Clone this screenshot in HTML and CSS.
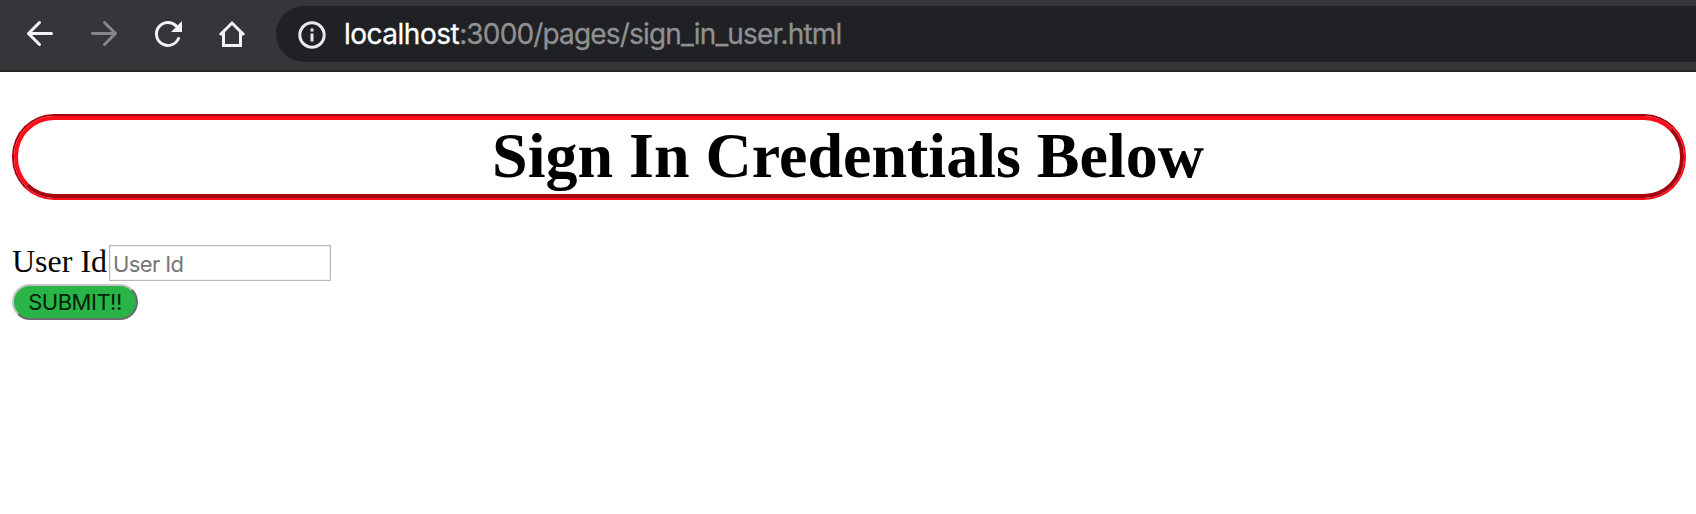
FILE: index.html
```html
<!DOCTYPE html>
<html lang="en">
<head>
<meta charset="utf-8">
<title>Sign In</title>
<link rel="stylesheet" href="styles.css">
</head>
<body>
<header class="toolbar">
  <nav class="nav">
    <svg class="icon" viewBox="0 0 32 32"><path d="M27.500 15.500H4.500M15.500 4.500L4.500 15.500l11 11"/></svg>
    <svg class="icon icon-disabled" viewBox="0 0 32 32"><path d="M4.500 15.500H27.500M16.500 4.500L27.500 15.500l-11 11"/></svg>
    <svg class="icon" viewBox="0 0 32 32"><path d="M26.500 20.500A11.500 11.500 0 1 1 24.200 7.900"/><path class="solid" d="M30 3v11H19z"/></svg>
    <svg class="icon" viewBox="0 0 32 32"><path class="home" d="M4 17L16 5l12 12M7.500 14.500v13h17v-13"/></svg>
  </nav>
  <div class="address">
    <svg class="info" viewBox="0 0 28 28"><circle cx="14" cy="14" r="12.200"/><path d="M14 12.500v8M14 7.500v3"/></svg>
    <div class="url"><span class="host">localhost</span><span class="path">:3000/pages/sign_in_user.html</span></div>
  </div>
</header>
<main class="page">
  <h1 class="title"><span class="title-inner">Sign In Credentials Below</span></h1>
  <form class="form">
    <div class="field"><label class="label" for="uid">User Id</label><input class="input" id="uid" type="text" placeholder="User Id"></div>
    <button class="submit" type="button">SUBMIT!!</button>
  </form>
</main>
</body>
</html>
```
FILE: styles.css
```css
* { box-sizing: border-box; }
body { margin: 0; background: #fff; color: #000; font-family: "Liberation Serif", serif; overflow: hidden; }
.toolbar { display: flex; height: 72px; padding: 6px 0 8px 24px; background: #35363a; border-bottom: 2px solid #292526; }
.nav { display: flex; gap: 32px; padding-top: 12px; width: 252px; flex: none; }
.icon { width: 32px; height: 32px; flex: none; fill: none; stroke: #f1f3f4; stroke-width: 3; stroke-linecap: round; stroke-linejoin: round; }
.icon-disabled { stroke: #858688; }
.icon .solid { fill: #f1f3f4; stroke: none; }
.icon .home { stroke-linecap: butt; stroke-linejoin: miter; }
.address { display: flex; align-items: center; flex: 1; height: 56px; padding-left: 22px; background: #202124; border-radius: 28px 0 0 28px; }
.info { width: 28px; height: 28px; margin: 1px 18px 0 0; fill: none; stroke: #e8eaed; stroke-width: 3; }
.url { font: 28px/40px Inter, sans-serif; white-space: nowrap; -webkit-text-stroke: 0.300px; }
.host { color: #fff; letter-spacing: -0.500px; }
.path { color: #8f9092; letter-spacing: -0.840px; }
.page { padding: 42px 10px 0 12px; }
.title { margin: 0 0 42px; border: 2px solid; border-color: #a5060f #ff0c1b #ff0c1b #a5060f; border-radius: 42px; font-size: 64px; line-height: 72px; text-align: center; }
.title-inner { display: block; padding: 0 2px 2px 0; border: 4px solid; border-color: #ff0c1b #a5060f #a5060f #ff0c1b; border-radius: 40px; }
.field { display: flex; align-items: flex-start; height: 42px; }
.label { width: 97px; font-size: 32px; line-height: 39px; white-space: nowrap; }
.input { width: 222px; height: 36px; margin-top: 3px; padding: 2px 3px 0; border: 1px solid #b8b8b8; border-radius: 0; box-shadow: inset 0 0 0 1px #f0f0f0; background: #fff; font: 22px Inter, sans-serif; letter-spacing: -0.600px; outline: 0; }
.input::placeholder { color: #777; opacity: 1; }
.submit { display: block; width: 126px; height: 36px; padding: 0; border: 2px solid; border-color: #c4c4c4 #6b6b6b #6b6b6b #c4c4c4; border-radius: 18px; background: #28b446; color: #06200b; font: 22px/32px Inter, sans-serif; letter-spacing: -0.500px; }
```
